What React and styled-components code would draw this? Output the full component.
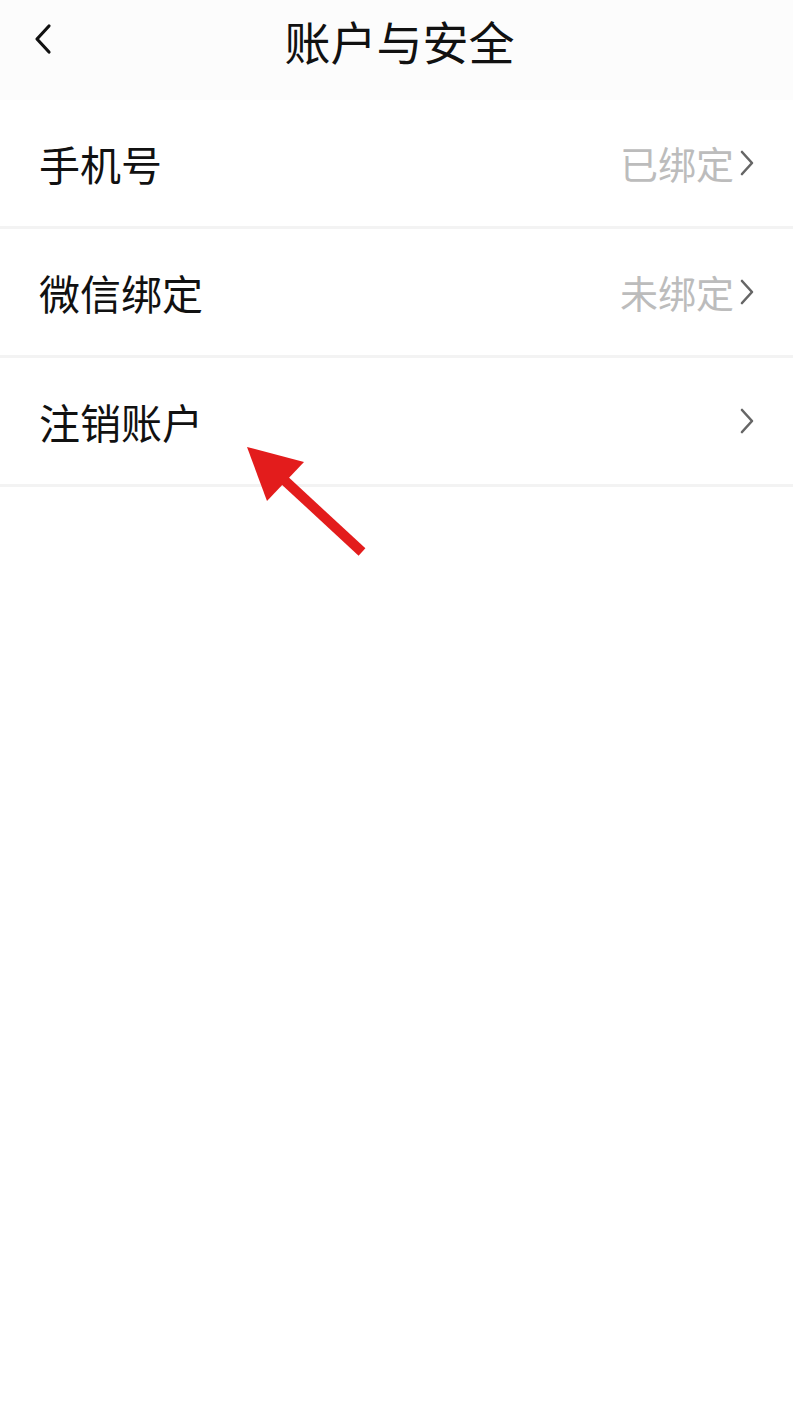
import React from "react";
import styled, { createGlobalStyle } from "styled-components";

const GlobalStyle = createGlobalStyle`
  html, body {
    margin: 0;
    padding: 0;
    background: #ffffff;
  }
  body {
    font-family: "Noto Sans CJK SC", "Noto Sans", sans-serif;
    color: #111111;
  }
`;

const ROWS = [
  { id: "phone", label: "手机号", value: "已绑定" },
  { id: "wechat", label: "微信绑定", value: "未绑定" },
  { id: "cancel", label: "注销账户", value: "" },
];

const App = () => {
  return (
    <Page>
      <GlobalStyle />
      <Header>
        <BackButton aria-label="返回">
          <svg width="22" height="32" viewBox="0 0 22 32" fill="none">
            <path
              d="M17 3 L5 16 L17 29"
              stroke="#111"
              strokeWidth="3.2"
              strokeLinecap="round"
              strokeLinejoin="round"
            />
          </svg>
        </BackButton>
        <Title>账户与安全</Title>
      </Header>
      <List>
        {ROWS.map((row) => (
          <Row key={row.id}>
            <Label>{row.label}</Label>
            <Right>
              {row.value && <Value>{row.value}</Value>}
              <Chevron width="16" height="26" viewBox="0 0 16 26" fill="none">
                <path
                  d="M3 2 L13 13 L3 24"
                  stroke="#666"
                  strokeWidth="2.6"
                  strokeLinecap="round"
                  strokeLinejoin="round"
                />
              </Chevron>
            </Right>
          </Row>
        ))}
      </List>
      <Arrow width="793" height="1401" viewBox="0 0 793 1401">
        <line
          x1="362"
          y1="552"
          x2="282"
          y2="478"
          stroke="#e31c1c"
          strokeWidth="10"
        />
        <polygon points="247,447 304,462 267,501" fill="#e31c1c" />
      </Arrow>
    </Page>
  );
};

export default App;

const Page = styled.div`
  position: relative;
  width: 793px;
  height: 1401px;
  background: #ffffff;
  overflow: hidden;
`;

const Header = styled.div`
  position: relative;
  height: 100px;
  box-sizing: border-box;
  padding-top: 17px;
  background: #fcfcfc;
  display: flex;
  align-items: flex-start;
  justify-content: center;
`;

const BackButton = styled.div`
  position: absolute;
  left: 32px;
  top: 23px;
  display: flex;
`;

const Title = styled.div`
  font-size: 46px;
  line-height: 1;
  color: #111;
  padding-left: 6px;
`;

const List = styled.div`
  display: flex;
  flex-direction: column;
`;

const Row = styled.div`
  height: 126px;
  border-bottom: 3px solid #f3f3f3;
  display: flex;
  align-items: center;
  justify-content: space-between;
  padding: 0 38px 0 39px;
`;

const Label = styled.div`
  font-size: 41px;
  color: #111;
  line-height: 1;
`;

const Right = styled.div`
  display: flex;
  align-items: center;
  gap: 5px;
`;

const Value = styled.div`
  font-size: 38px;
  color: #bcbcbc;
  line-height: 1;
`;

const Chevron = styled.svg`
  display: block;
`;

const Arrow = styled.svg`
  position: absolute;
  left: 0;
  top: 0;
  pointer-events: none;
`;
